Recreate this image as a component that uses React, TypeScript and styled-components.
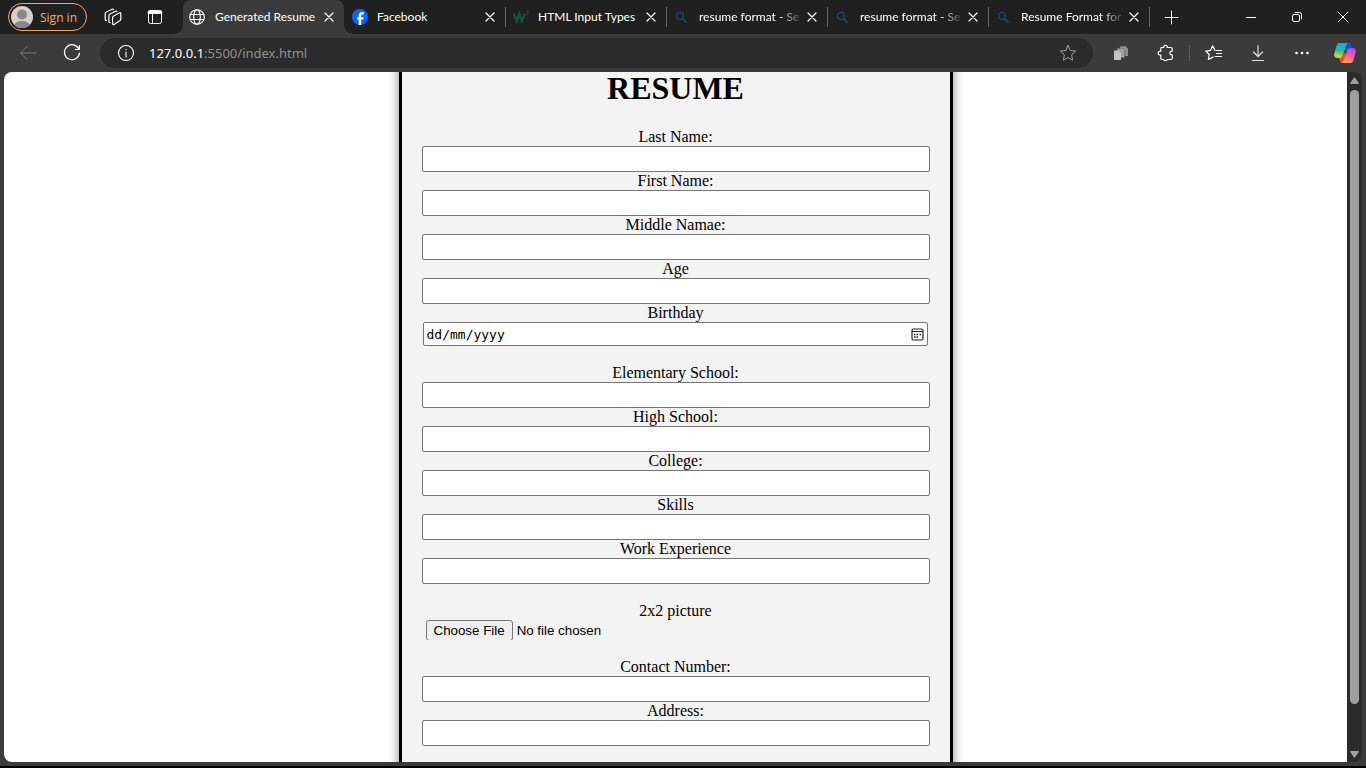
import React from "react";
import styled, { createGlobalStyle } from "styled-components";

const ui = '"Noto Sans", "Open Sans", sans-serif';
const tabFont = 'Lato, "Open Sans", sans-serif';
const serif = '"Liberation Serif", "Times New Roman", serif';

const GlobalStyle = createGlobalStyle`
  * { box-sizing: border-box; }
  body { margin: 0; background: #000; }
  button { border: 0; padding: 0; background: none; color: inherit; font: inherit; }
  svg { display: block; flex: none; }
`;

const Window = styled.div`
  display: flex;
  flex-direction: column;
  height: 100vh;
  padding-bottom: 2px;
  background: #000;
  color: #fff;
  font-family: ${ui};
  font-size: 12px;
`;

const TitleBar = styled.header`
  display: flex;
  flex: none;
  align-items: center;
  height: 34px;
  background: #202020;
`;

const SignInButton = styled.button`
  && {
    display: flex;
    align-items: center;
    gap: 7px;
    flex: none;
    width: 79px;
    height: 28px;
    margin: 0 5px 0 8px;
    padding: 0 2px;
    border: 1px solid #f2a56d;
    border-radius: 14px;
    color: #f5a870;
    font-family: "Open Sans", sans-serif;
    white-space: nowrap;
  }
`;

const IconButton = styled.button<{ $width?: number; $color?: string }>`
  && {
    display: flex;
    flex: none;
    align-items: center;
    justify-content: center;
    width: ${(p) => p.$width ?? 44}px;
    height: 30px;
    color: ${(p) => p.$color ?? "#fff"};
  }
`;

const TabStrip = styled.nav`
  display: flex;
  flex: 0 1 973px;
  min-width: 0;
  height: 34px;
  padding-left: 7px;
  font-family: ${tabFont};
`;

const Tab = styled.div<{ $active?: boolean }>`
  position: relative;
  display: flex;
  flex: 1 1 161px;
  align-items: center;
  gap: ${(p) => (p.$active ? 10 : 9)}px;
  min-width: 0;
  padding: 0 7px 0 ${(p) => (p.$active ? 6 : 8)}px;
  border-radius: 8px 8px 0 0;
  background: ${(p) => (p.$active ? "#3b3b3b" : "transparent")};

  &::before,
  &::after {
    content: "";
    display: ${(p) => (p.$active ? "block" : "none")};
    position: absolute;
    bottom: 0;
    width: 8px;
    height: 8px;
  }
  &::before {
    left: -8px;
    background: radial-gradient(circle at 0 0, transparent 7px, #3b3b3b 8px);
  }
  &::after {
    right: -8px;
    background: radial-gradient(circle at 100% 0, transparent 7px, #3b3b3b 8px);
  }
`;

const TabLink = styled.a<{ $fade?: boolean }>`
  flex: 1;
  min-width: 0;
  overflow: hidden;
  color: #fff;
  line-height: 20px;
  text-decoration: none;
  white-space: nowrap;
  mask-image: ${(p) => (p.$fade ? "linear-gradient(to left, transparent, #000 24px)" : "none")};
`;

const CloseButton = styled(IconButton)`
  && {
    width: 16px;
    height: 16px;
    margin-left: -8px;
  }
`;

const TabDivider = styled.span`
  position: absolute;
  right: -1px;
  top: 7px;
  width: 1px;
  height: 20px;
  background: #666;
`;

const WindowControls = styled.div`
  display: flex;
  margin-left: auto;
`;

const Toolbar = styled.div`
  display: flex;
  flex: none;
  align-items: center;
  height: 38px;
  padding-left: 6px;
  background: #3b3b3b;
`;

const AddressBar = styled.div`
  display: flex;
  flex: 1;
  align-items: center;
  min-width: 0;
  height: 30px;
  margin: 0 6px;
  padding: 0 3px 0 17px;
  border-radius: 15px;
  background: #2b2b2b;
`;

const Url = styled.span`
  flex: 1;
  min-width: 0;
  margin-left: 14px;
  overflow: hidden;
  color: #8f8f8f;
  font-size: 13px;
  line-height: 20px;
  white-space: nowrap;

  b {
    color: #fff;
    font-weight: 400;
  }
`;

const ToolbarDivider = styled.span`
  width: 1px;
  height: 16px;
  margin: 0 2px;
  background: #5c5c5c;
`;

const Frame = styled.div`
  display: flex;
  flex: 1;
  min-height: 0;
  padding: 0 4px 4px;
  background: #3b3b3b;
`;

const Viewport = styled.main`
  flex: 1;
  overflow: hidden;
  border-radius: 8px 0 0 8px;
  background: #fff;
  color: #000;
  font-family: ${serif};
  font-size: 16px;
`;

const ScrollBar = styled.div`
  display: flex;
  flex: none;
  flex-direction: column;
  align-items: center;
  justify-content: space-between;
  width: 15px;
  padding: 5px 0 4px;
  border-radius: 0 8px 8px 0;
  background: #2b2b2b;
  color: #9f9f9f;
`;

const Track = styled.div`
  flex: 1;
  width: 9px;
  margin: 6px 0 8px;
`;

const Thumb = styled.div`
  height: 94%;
  border-radius: 5px;
  background: #9f9f9f;
`;

const Card = styled.form`
  max-width: 554px;
  min-height: calc(100% + 48px);
  margin: -24px auto;
  padding: 24px 20px;
  border: solid #000;
  border-width: 0 3px;
  background: #f3f3f3;
  box-shadow: 0 0 10px rgba(0, 0, 0, 0.5);
  text-align: center;
`;

const Title = styled.h1`
  margin: 0 0 24px;
  font-size: 32px;
  line-height: 32px;
`;

const Group = styled.section`
  margin-bottom: 18px;
`;

const FieldLabel = styled.label`
  display: block;
  line-height: 18px;
`;

const TextInput = styled.input`
  display: block;
  width: 100%;
  height: 26px;
  border: 1px solid #767676;
  border-radius: 2px;
  background: #fff;
`;

const DateBox = styled.div`
  display: flex;
  align-items: center;
  height: 24px;
  margin: 0 2px 0 1px;
  padding: 0 3px;
  border: 1px solid #767676;
  border-radius: 2px;
  background: #fff;
`;

const DateInput = styled.input`
  flex: 1;
  min-width: 0;
  padding: 0;
  border: 0;
  background: none;
  font: 13px "DejaVu Sans Mono", monospace;

  &::placeholder {
    color: #000;
  }
`;

const FileInput = styled.input`
  display: block;
  width: 100%;
  height: 20px;
  padding: 0 4px;
  overflow: hidden;
  color: #000;
  font-family: "Liberation Sans", Arial, sans-serif;

  &::file-selector-button {
    height: 21px;
    margin: 0 4px 0 0;
    padding: 0 7px;
    border: 1px solid #767676;
    border-radius: 3px;
    background: #efefef;
    color: #000;
    font: inherit;
  }
`;

const Svg = ({ size = 16, w = 1, children }: { size?: number; w?: number; children: React.ReactNode }) => (
  <svg width={size} height={size} viewBox={`0 0 ${size} ${size}`} fill="none" stroke="currentColor"
    strokeWidth={w} strokeLinecap="round" strokeLinejoin="round" aria-hidden="true">
    {children}
  </svg>
);

const Avatar = () => (
  <svg width="22" height="22" viewBox="0 0 22 22" aria-hidden="true">
    <clipPath id="avatar"><circle cx="11" cy="11" r="11" /></clipPath>
    <g clipPath="url(#avatar)">
      <rect width="22" height="22" fill="#d4d2d0" />
      <circle cx="11" cy="8.5" r="5" fill="#8a8886" />
      <ellipse cx="11" cy="20" rx="8" ry="5" fill="#8a8886" />
    </g>
  </svg>
);

const WorkspacesIcon = () => (
  <Svg size={18} w={1.2}>
    <path d="M9.300 8.200 15.600 4.800c.7-.4 1.200 0 1.200.7v5.800c0 .6-.2 1-.7 1.300L10 16.400c-.8.500-1.400.1-1.400-.8V9.400c0-.5.200-.9.700-1.200Z" />
    <path d="M6.200 14.600c-.9.200-1.300-.3-1.300-1.100V7.600c0-.6.200-1 .8-1.300L11.500 3.200c.7-.4 1.200-.2 1.400.4" />
    <path d="M2.500 12.500c-.9.200-1.300-.3-1.300-1.100V5.600c0-.6.200-1 .8-1.300L7.900 1.300c.7-.4 1.200-.2 1.400.4" />
  </Svg>
);

const VerticalTabsIcon = () => (
  <Svg>
    <rect x="1.500" y="1.500" width="13" height="13" rx="2" />
    <path d="M1.500 4h13M2 2.500h12" strokeWidth="2" />
    <path d="M5.500 4v10.500" />
  </Svg>
);

const GlobeIcon = () => (
  <Svg w={1.1}>
    <circle cx="8" cy="8" r="7.300" />
    <ellipse cx="8" cy="8" rx="3.300" ry="7.300" />
    <path d="M1.300 5.500h13.400M1.300 10.500h13.400" />
  </Svg>
);

const FacebookIcon = () => (
  <Svg>
    <circle cx="8" cy="8" r="8" fill="#0866ff" stroke="none" />
    <path d="M6.700 16v-5.400H5V8.200h1.700V7c0-2.700 1.200-3.900 3.700-3.900.5 0 1 .1 1.300.2v2.100h-.9c-1.200 0-1.600.5-1.600 1.600v1.200h2.400l-.4 2.400h-2V16Z" fill="#fff" stroke="none" />
  </Svg>
);

const W3Icon = () => (
  <svg width="16" height="16" viewBox="0 0 16 16" fill="none" stroke="#125240" aria-hidden="true">
    <path d="m1 4.500 2.700 7.500 2.600-7 2.700 7 2.800-7.500" strokeWidth="2.500" />
    <path d="M13.300 2.500h2l-1.200 1.600c1.200 0 1.400 2-.8 1.800" />
  </svg>
);

const SearchIcon = () => (
  <svg width="16" height="16" viewBox="0 0 16 16" fill="none" stroke="#174669" aria-hidden="true">
    <circle cx="6" cy="7" r="3.400" strokeWidth="1.500" />
    <path d="m8.500 9.500 4 4" strokeWidth="1.800" />
  </svg>
);

const CloseIcon = () => <Svg size={10} w={1.2}><path d="m1 1 8 8M9 1 1 9" /></Svg>;

const CopilotIcon = () => (
  <svg width="22" height="22" viewBox="0 0 22 22" aria-hidden="true">
    <defs>
      <linearGradient id="cool" x1="0.400" y1="0" x2="0.200" y2="1">
        <stop offset="0" stopColor="#19a9f5" />
        <stop offset=".45" stopColor="#2cb4a0" />
        <stop offset=".8" stopColor="#b5d437" />
        <stop offset="1" stopColor="#f2c811" />
      </linearGradient>
      <linearGradient id="warm" x1=".8" y1="0" x2=".3" y2="1">
        <stop offset="0" stopColor="#a34bf0" />
        <stop offset=".5" stopColor="#f0609e" />
        <stop offset="1" stopColor="#ffa24b" />
      </linearGradient>
    </defs>
    <path d="M10 1h5c1.500 0 2.100 1 2.500 2.300L18.500 6.500h-3c-1.800 0-2.700.8-3.200 2.400L11 12Z" fill="#1652c9" />
    <path d="M5 15.500h3L11 10l1 4-2 6.500c-2.500 1-3.500 0-4-1.500Z" fill="#ee5140" />
    <path d="M5.500 1h9c-1.500.4-2.200 1.500-2.700 3.200L9 13c-.6 2-1.500 3-3.300 3H3C.8 16-.2 14.300.3 12L2.400 4C3 2 3.800 1 5.500 1Z" fill="url(#cool)" />
    <path d="M16.500 21h-9c1.500-.4 2.200-1.500 2.700-3.200L13 9c.6-2 1.500-3 3.300-3H19c2.200 0 3.200 1.700 2.700 4l-2.100 8c-.6 2-1.400 3-3.100 3Z" fill="url(#warm)" />
  </svg>
);

const CalendarIcon = () => (
  <svg width="13" height="13" viewBox="0 0 13 13" fill="none" stroke="#222" aria-hidden="true">
    <rect x="1" y="1" width="11" height="11" rx="1.500" strokeWidth="1.200" />
    <path d="M1 3.500h11" />
    <path d="M3 6.500h1.500M5.500 6.500H7M8.500 6.500H10M3 9h1.500M5.500 9H7" strokeWidth="1.300" />
  </svg>
);

const tabs = [
  { title: "Generated Resume", icon: <GlobeIcon />, active: true },
  { title: "Facebook", icon: <FacebookIcon /> },
  { title: "HTML Input Types", icon: <W3Icon /> },
  { title: "resume format - Se", icon: <SearchIcon />, fade: true },
  { title: "resume format - Se", icon: <SearchIcon />, fade: true },
  { title: "Resume Format for", icon: <SearchIcon />, fade: true },
];

const Field = ({ id, label }: { id: string; label: string }) => (
  <>
    <FieldLabel htmlFor={id}>{label}</FieldLabel>
    <TextInput id={id} type="text" />
  </>
);

export default function App() {
  return (
    <Window>
      <GlobalStyle />
      <TitleBar>
        <SignInButton><Avatar />Sign in</SignInButton>
        <IconButton $width={42} aria-label="Workspaces"><WorkspacesIcon /></IconButton>
        <IconButton $width={42} aria-label="Tab actions"><VerticalTabsIcon /></IconButton>
        <TabStrip>
          {tabs.map((tab, i) => (
            <Tab key={i} $active={tab.active}>
              {tab.icon}
              <TabLink href="#" $fade={tab.fade}>{tab.title}</TabLink>
              <CloseButton aria-label="Close tab"><CloseIcon /></CloseButton>
              {!tab.active && <TabDivider />}
            </Tab>
          ))}
        </TabStrip>
        <IconButton aria-label="New tab"><Svg><path d="M8.500 2v13M2 8.500h13" /></Svg></IconButton>
        <WindowControls>
          <IconButton $width={46} aria-label="Minimize"><Svg size={10}><path d="M0 5.500h10" /></Svg></IconButton>
          <IconButton $width={46} aria-label="Restore">
            <Svg size={12}>
              <rect x="1.500" y="3.500" width="7" height="7" rx="1.500" />
              <path d="M4 1.500h4.500a2 2 0 0 1 2 2V8" />
            </Svg>
          </IconButton>
          <IconButton $width={46} aria-label="Close"><Svg size={12}><path d="m1 1 10 10M11 1 1 11" /></Svg></IconButton>
        </WindowControls>
      </TitleBar>

      <Toolbar>
        <IconButton $color="#7b7b7b" aria-label="Back"><Svg size={18}><path d="M17 9H2m6-6.500L1.500 9 8 15.500" /></Svg></IconButton>
        <IconButton aria-label="Refresh">
          <Svg size={18} w={1.2}><path d="M15.800 5A7.500 7.500 0 1 0 16.500 9M16.300 1.500V5.500h-4" /></Svg>
        </IconButton>
        <AddressBar>
          <Svg size={18} w={1.1}>
            <circle cx="9" cy="9" r="7.500" />
            <path d="M9 8v5M9 5.200v.4" />
          </Svg>
          <Url><b>127.0.0.1</b>:5500/index.html</Url>
          <IconButton $color="#a0a0a0" aria-label="Add to favorites">
            <Svg size={18}><path d="m9 1.500 2.300 5 5.200.6-3.900 3.700 1 5.400L9 13.600l-4.600 2.600 1-5.400L1.500 7.100l5.200-.6Z" /></Svg>
          </IconButton>
        </AddressBar>
        <IconButton $color="#a8a8a8" aria-label="Collections">
          <Svg>
            <path d="M7 1.500 12 1l3 2.500v7.500H9V3H7Z" fill="#8c8c8c" stroke="none" />
            <path d="M4.500 3.500 9 3l2.500 2v7.500h-7Z" fill="#a0a0a0" stroke="#6a6a6a" strokeWidth=".6" />
            <path d="M1 5.500h4.500l2.500 2.300V15H1Z" fill="#c2c2c2" stroke="none" />
          </Svg>
        </IconButton>
        <IconButton aria-label="Extensions">
          <Svg size={18} w={1.2}>
            <path d="M5 3.500h2.700c-.5-3 4.100-3 3.600 0H15a1.200 1.200 0 0 1 1.200 1.200v2.500c-3.200-.6-3.200 4.200 0 3.600v3.500A1.200 1.200 0 0 1 15 15.500h-3.700c.3 1.400-3.900 1.400-3.600 0H6a1.200 1.200 0 0 1-1.200-1.200v-3.200c-3.500.5-3.500-4.400 0-3.900V4.700c0-.7.200-1.200.9-1.200" />
          </Svg>
        </IconButton>
        <ToolbarDivider />
        <IconButton aria-label="Favorites">
          <Svg size={18} w={1.2}>
            <path d="M10 12.500h6.500M11.500 9.500h5M11.500 6.500h5M10 6.500 7.700 1.800 5.500 6.400l-4.700.7L4.200 10.500l-.8 5 4.600-2.400" />
          </Svg>
        </IconButton>
        <IconButton $color="#dedede" aria-label="Downloads">
          <Svg size={18} w={1.2}><path d="M9 1.500v11m-4.500-4.500L9 12.500 13.500 8M3.500 16.500h11" /></Svg>
        </IconButton>
        <IconButton aria-label="Settings and more">
          <Svg><g fill="currentColor" stroke="none"><circle cx="2.500" cy="8" r="1.300" /><circle cx="8" cy="8" r="1.300" /><circle cx="13.500" cy="8" r="1.300" /></g></Svg>
        </IconButton>
        <IconButton $width={42} aria-label="Copilot"><CopilotIcon /></IconButton>
      </Toolbar>

      <Frame>
        <Viewport>
          <Card>
            <Title>RESUME</Title>
            <Group>
              <Field id="last" label="Last Name:" />
              <Field id="first" label="First Name:" />
              <Field id="middle" label="Middle Namae:" />
              <Field id="age" label="Age" />
              <FieldLabel htmlFor="birthday">Birthday</FieldLabel>
              <DateBox>
                <DateInput id="birthday" placeholder="dd/mm/yyyy" />
                <CalendarIcon />
              </DateBox>
            </Group>
            <Group>
              <Field id="elementary" label="Elementary School:" />
              <Field id="high" label="High School:" />
              <Field id="college" label="College:" />
              <Field id="skills" label="Skills" />
              <Field id="work" label="Work Experience" />
            </Group>
            <Group>
              <FieldLabel htmlFor="picture">2x2 picture</FieldLabel>
              <FileInput id="picture" type="file" />
            </Group>
            <Group>
              <Field id="contact" label="Contact Number:" />
              <Field id="address" label="Address:" />
            </Group>
          </Card>
        </Viewport>
        <ScrollBar aria-hidden="true">
          <svg width="9" height="7" viewBox="0 0 9 7" fill="currentColor"><path d="M4.500 0 9 6.200 8.500 7h-8L0 6.200Z" /></svg>
          <Track><Thumb /></Track>
          <svg width="9" height="7" viewBox="0 0 9 7" fill="currentColor"><path d="M4.500 7 0 .8.500 0h8L9 .8Z" /></svg>
        </ScrollBar>
      </Frame>
    </Window>
  );
}
